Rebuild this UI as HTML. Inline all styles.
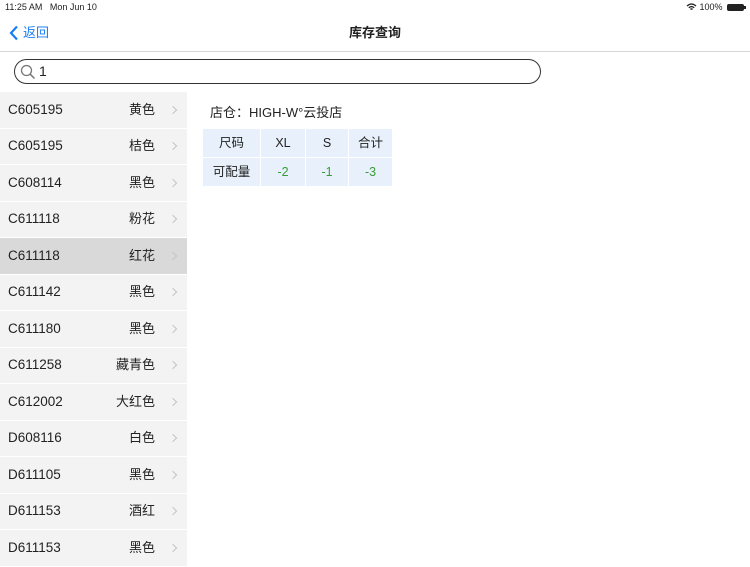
<!DOCTYPE html>
<html><head><meta charset="utf-8"><style>
*{margin:0;padding:0;box-sizing:border-box}
body{width:750px;height:562px;overflow:hidden;background:#fff;font-family:"Liberation Sans","Noto Sans CJK SC",sans-serif;position:relative;color:#222;line-height:16px}
.abs{position:absolute}
.row{position:absolute;left:0;width:187px;background:#f3f3f3;border-bottom:1px solid #fff;font-size:13px}
.row .c,.row .k{position:absolute;top:50%;margin-top:-8px;height:16px;line-height:16px}
.row .c{left:8px;font-size:13.5px}
.row .k{right:32px}
.row .a{position:absolute;right:11px;top:50%;width:6px;height:6px;border-right:1.3px solid #c4c4c4;border-top:1.3px solid #c4c4c4;transform:translateY(-50%) rotate(45deg)}
table{position:absolute;left:202px;top:128px;border-collapse:collapse;font-size:12.5px}
td{background:#e8f1fb;border:1px solid #fff;text-align:center;height:29px;line-height:14px;vertical-align:middle;padding:0}
td span{display:inline-block;height:14px;line-height:14px}
.g{color:#3a9a3a}
</style></head><body>
<div class="abs" style="left:5px;top:2px;font-size:9px;line-height:11px">11:25 AM&nbsp;&nbsp;&nbsp;Mon Jun 10</div>
<div class="abs" style="left:686px;top:2px;font-size:9px;line-height:11px">
<svg width="11" height="8" viewBox="0 0 11 8" style="vertical-align:-1px"><path d="M1 3Q5.5-1 10 3M2.8 4.8Q5.5 2.4 8.2 4.8M4.4 6.4Q5.5 5.5 6.6 6.4" stroke="#222" stroke-width="1.3" fill="none"/></svg> 100%</div>
<div class="abs" style="left:727px;top:4px;width:17px;height:7px;background:#222;border-radius:2px"></div>
<div class="abs" style="left:744px;top:6px;width:1.5px;height:3px;background:#222"></div>
<svg class="abs" style="left:9px;top:25px" width="10" height="16" viewBox="0 0 10 16"><path d="M8 1.5L2 8l6 6.5" stroke="#1a7cf5" stroke-width="2.2" fill="none"/></svg>
<div class="abs" style="left:23px;top:25px;font-size:13px;color:#1a7cf5">返回</div>
<div class="abs" style="left:0;width:750px;top:25px;text-align:center;font-size:13px;font-weight:bold">库存查询</div>
<div class="abs" style="left:0;top:51px;width:750px;height:1px;background:#d8d8d8"></div>
<div class="abs" style="left:14px;top:59px;width:527px;height:25px;border:1.3px solid #333;border-radius:13px"></div>
<svg class="abs" style="left:20px;top:64px" width="16" height="16" viewBox="0 0 16 16"><circle cx="6.5" cy="6.5" r="5" stroke="#777" stroke-width="1.3" fill="none"/><path d="M10.2 10.2L14.5 14.5" stroke="#777" stroke-width="1.5"/></svg>
<div class="abs" style="left:39px;top:63px;font-size:14px">1</div>
<div class="row" style="top:92px;height:36.5px"><span class="c">C605195</span><span class="k">黄色</span><span class="a"></span></div>
<div class="row" style="top:128.5px;height:36.6px"><span class="c">C605195</span><span class="k">桔色</span><span class="a"></span></div>
<div class="row" style="top:165px;height:36.6px"><span class="c">C608114</span><span class="k">黑色</span><span class="a"></span></div>
<div class="row" style="top:201.5px;height:36.6px"><span class="c">C611118</span><span class="k">粉花</span><span class="a"></span></div>
<div class="row" style="top:238px;height:36.6px;background:#d9d9d9"><span class="c">C611118</span><span class="k">红花</span><span class="a"></span></div>
<div class="row" style="top:274.5px;height:36.6px"><span class="c">C611142</span><span class="k">黑色</span><span class="a"></span></div>
<div class="row" style="top:311px;height:36.6px"><span class="c">C611180</span><span class="k">黑色</span><span class="a"></span></div>
<div class="row" style="top:347.5px;height:36.6px"><span class="c">C611258</span><span class="k">藏青色</span><span class="a"></span></div>
<div class="row" style="top:384px;height:36.6px"><span class="c">C612002</span><span class="k">大红色</span><span class="a"></span></div>
<div class="row" style="top:420.5px;height:36.6px"><span class="c">D608116</span><span class="k">白色</span><span class="a"></span></div>
<div class="row" style="top:457px;height:36.6px"><span class="c">D611105</span><span class="k">黑色</span><span class="a"></span></div>
<div class="row" style="top:493.5px;height:36.6px"><span class="c">D611153</span><span class="k">酒红</span><span class="a"></span></div>
<div class="row" style="top:530px;height:36.6px"><span class="c">D611153</span><span class="k">黑色</span><span class="a"></span></div>
<div class="abs" style="left:210px;top:105px;font-size:13px">店仓：HIGH-W°云投店</div>
<table>
<tr><td style="width:58px"><span>尺码</span></td><td style="width:45px"><span>XL</span></td><td style="width:43px"><span>S</span></td><td style="width:44px"><span>合计</span></td></tr>
<tr><td><span>可配量</span></td><td class="g"><span>-2</span></td><td class="g"><span>-1</span></td><td class="g"><span>-3</span></td></tr>
</table>
</body></html>
